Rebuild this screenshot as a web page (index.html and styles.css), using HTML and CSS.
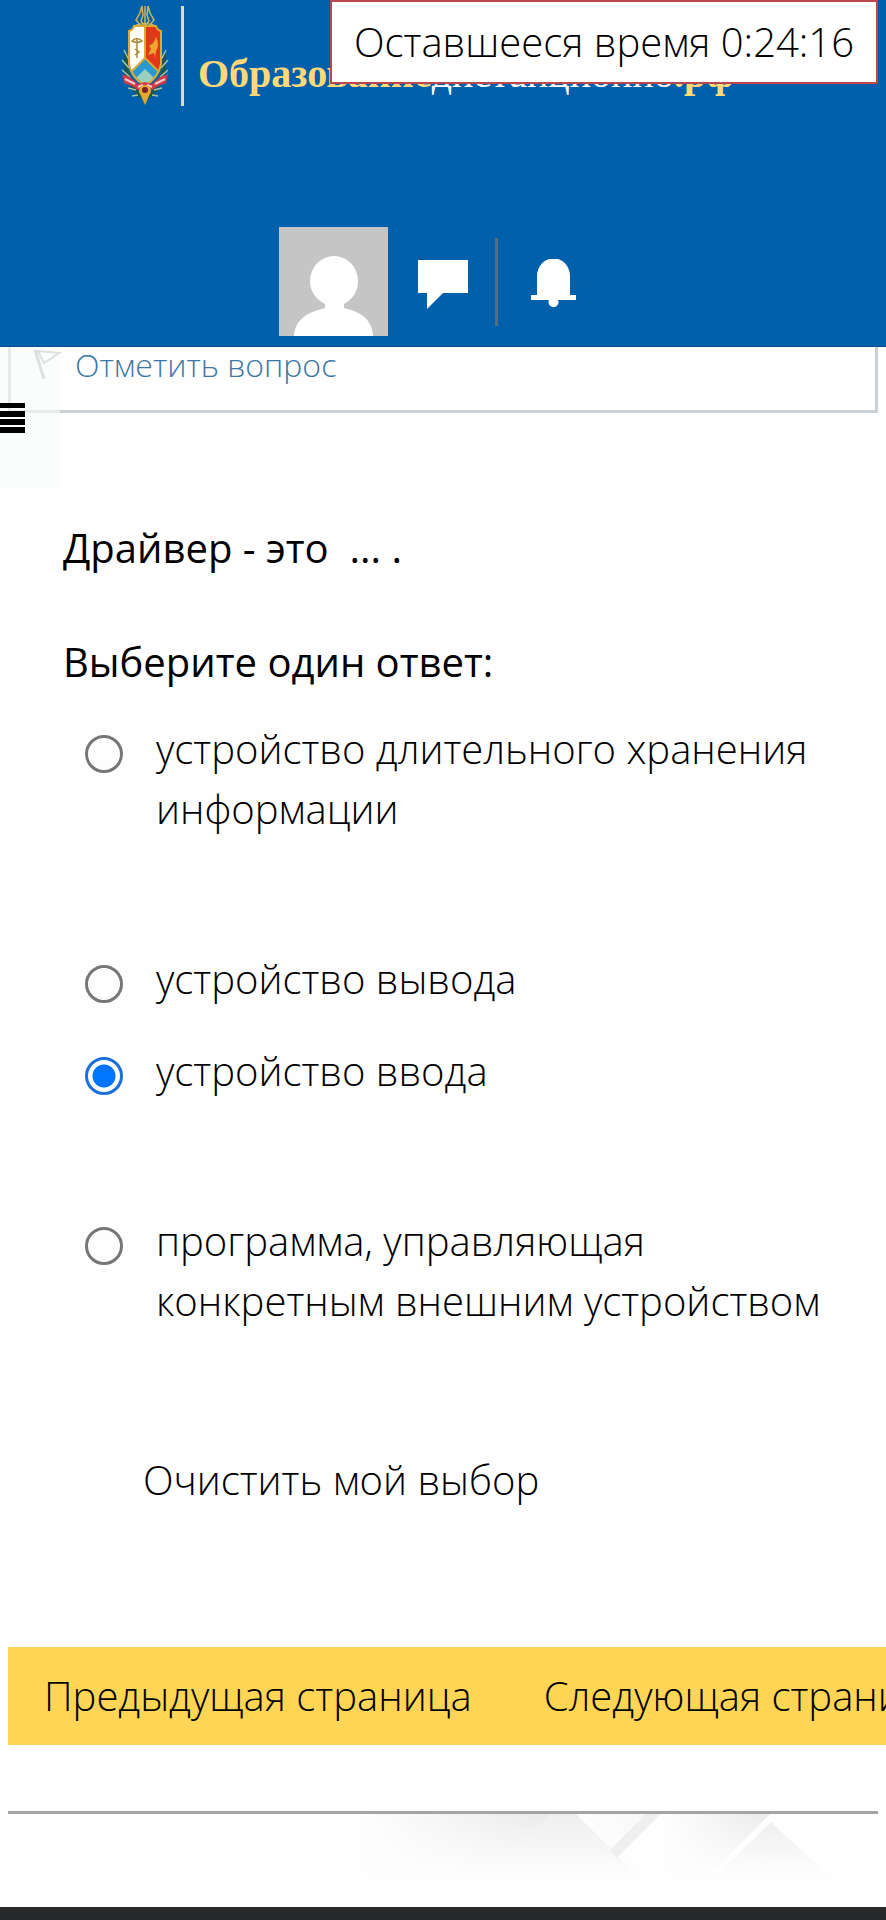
FILE: index.html
```
<!DOCTYPE html>
<html lang="ru">
<head>
    <meta charset="UTF-8">
    <meta name="viewport" content="width=device-width, initial-scale=1.0">
    <title>Тест</title>
    <link rel="stylesheet" href="styles.css">
</head>
<body>
    <header class="header">
        <a class="logo" href="#">
            <svg class="crest" viewBox="0 0 48 102" aria-hidden="true">
                <!-- crown -->
                <path d="M24 22V2M20 22l-5-6 4-7 2-7 1 9-2 6 4 5M28 22l5-6-4-7-2-7-1 9 2 6-4 5M13 22q11-5 22 0" fill="none" stroke="#c9b75f" stroke-width="1.5"/>
                <!-- laurel -->
                <path d="M5 50q-2 30 17 44M43 50q2 30-17 44" fill="none" stroke="#1e5647" stroke-width="4"/>
                <path d="M3 46l5 10M1 56l7 8M1 66l8 7M7 84l8 2M11 92l6-1M45 46l-5 10M47 56l-7 8M47 66l-8 7M41 84l-8 2M37 92l-6-1" stroke="#a3c4a5" stroke-width="1.5"/>
                <path d="M24 22h11q1 4 5 5v33q-2 11-16 18z" fill="#e3371b"/>
                <path d="M24 22H13q-1 4-5 5v33q2 11 16 18z" fill="#fff"/>
                <path d="M24 55L10 68q4 8 14 14 10-6 14-14z" fill="#2a98d0"/>
                <path d="M24 65l-9 9 9 8 9-8z" fill="#9acfc0"/>
                <path d="M13 22q-1 4-5 5v33q2 13 16 22 14-9 16-22V27q-4-1-5-5zM24 22v32L10 68M24 54l14 14" fill="none" stroke="#d9ab35" stroke-width="2"/>
                <path d="M11 37q5-5 10 0-5 3-10 0zM16 34v20M14 45l4 3-4 3" fill="none" stroke="#a88a3d" stroke-width="1.5"/>
                <path d="M35 33q-3 9-7 8l2 4-3 6 6-2 1 5 1-7q4-6 0-14z" fill="#f0a52c"/>
                <!-- ribbon and eye -->
                <path d="M1 70l8 3 8 7 7-2 7 2 8-7 8-3-2 9-8 3-6 4-7-2-7 2-6-4-8-3z" fill="#cf3b4b"/>
                <path d="M4 75l10 5M44 75l-10 5M17 83l5-2M31 83l-5-2" stroke="#f3c9c9" stroke-width="2"/>
                <circle cx="24" cy="87" r="6" fill="#e5a92f"/>
                <circle cx="24" cy="86" r="3" fill="#7b2030"/>
                <path d="M24 101l-4-9h8z" fill="#d9ab35"/>
            </svg>
            <span class="logo-text">Образование<span class="white">дистанционно</span>.рф</span>
        </a>
        <div class="user-menu">
            <a class="avatar" href="#" aria-label="Профиль">
                <svg viewBox="0 0 109 109">
                    <rect width="109" height="109" fill="#c5c5c5"/>
                    <path d="M15 109q1-18 21-25l10-3v-4q-15-8-15-23a24 25 0 0 1 48 0q0 15-14 23v4l10 3q18 7 19 25z" fill="#fff"/>
                </svg>
            </a>
            <button class="icon-btn messages" aria-label="Сообщения">
                <svg width="50" height="50" viewBox="0 0 50 50"><path d="M0 0h50v33H25L9 49V33H0z" fill="#fff"/></svg>
            </button>
            <button class="icon-btn bell" aria-label="Уведомления">
                <svg width="45" height="51" viewBox="0 0 45 51"><path d="M6 36V17a16 17 0 0 1 33 0v19h6v5H27a5 5 0 1 1-9 0H0v-5z" fill="#fff"/></svg>
            </button>
        </div>
    </header>

    <div class="timer">Оставшееся время 0:24:16</div>

    <main>
        <div class="info">
            <a class="flag" href="#">
                <svg width="28" height="32" viewBox="0 0 28 32" fill="none" stroke="#b4b7b7" aria-hidden="true">
                    <path d="M2 1l9 29" stroke-width="3"/>
                    <path d="M5 2l21 2-15 10z" stroke-width="2"/>
                </svg>
                Отметить вопрос
            </a>
            <button class="drawer" aria-label="Меню">
                <svg width="25" height="30" viewBox="0 0 25 30"><path d="M0 0h25v5H0zM0 8h25v6H0zM0 16h25v6H0zM0 24h25v6H0z"/></svg>
            </button>
        </div>

        <form class="question">
            <p class="qtext">Драйвер - это&nbsp; ... .</p>
            <fieldset>
                <legend>Выберите один ответ:</legend>
                <div class="answer spaced">
                    <input type="radio" name="answer" id="answer0">
                    <label for="answer0">устройство длительного хранения информации</label>
                </div>
                <div class="answer">
                    <input type="radio" name="answer" id="answer1">
                    <label for="answer1">устройство вывода</label>
                </div>
                <div class="answer spaced">
                    <input type="radio" name="answer" id="answer2" checked>
                    <label for="answer2">устройство ввода</label>
                </div>
                <div class="answer">
                    <input type="radio" name="answer" id="answer3">
                    <label for="answer3">программа, управляющая конкретным внешним устройством</label>
                </div>
            </fieldset>
            <a class="clear" href="#">Очистить мой выбор</a>
        </form>

        <div class="nav">
            <button>Предыдущая страница</button>
            <button>Следующая страница</button>
        </div>
        <hr>
    </main>

    <div class="pattern">
        <svg viewBox="0 0 886 93" aria-hidden="true">
            <defs>
                <linearGradient id="side">
                    <stop offset="0" stop-color="#000" stop-opacity="0"/>
                    <stop offset="1" stop-color="#000" stop-opacity="0.08"/>
                </linearGradient>
                <linearGradient id="down" x2="0" y2="1">
                    <stop offset="0" stop-color="#000" stop-opacity="0.06"/>
                    <stop offset="1" stop-color="#000" stop-opacity="0"/>
                </linearGradient>
                <linearGradient id="fade" x2="0" y2="1">
                    <stop offset="0" stop-color="#fefefe" stop-opacity="0"/>
                    <stop offset="0.7" stop-color="#fefefe"/>
                </linearGradient>
            </defs>
            <path d="M360 0h190l-66 66H360z" fill="url(#side)"/>
            <path d="M664 0h106l-66 66h-40z" fill="url(#side)"/>
            <path d="M576 0h84l-46 46z" fill="url(#side)" opacity="0.4"/>
            <rect width="886" height="93" fill="url(#fade)"/>
            <path d="M550 0h26l66 66H484z" fill="url(#down)"/>
            <path d="M771 8l60 56H714z" fill="url(#down)"/>
            <path d="M646 0h15l-44 44-7-8z" fill="#efefef"/>
        </svg>
    </div>
    <footer></footer>
</body>
</html>
```
FILE: styles.css
```
* {
    box-sizing: border-box;
}

body {
    margin: 0;
    min-height: 100vh;
    display: flex;
    flex-direction: column;
    position: relative;
    overflow-x: hidden;
    background-color: #fefefe;
    color: #000;
    font-family: "Open Sans", sans-serif;
    font-size: 40px;
    font-weight: 300;
    line-height: 60px;
}

a {
    color: inherit;
    text-decoration: none;
}

button {
    padding: 0;
    border: none;
    background: none;
    font: inherit;
    color: inherit;
    cursor: pointer;
}

svg {
    display: block;
}

/* Header */
.header {
    background-color: #0060ac;
    padding: 4px 8px 10px;
    border-bottom: 1px solid #0a4f8c;
}

.logo {
    display: flex;
    width: 644px;
    margin: 0 auto;
}

.crest {
    flex: none;
    width: 48px;
    height: 102px;
}

.logo-text {
    height: 100px;
    margin: 2px 0 0 12px;
    padding: 42px 0 0 14px;
    border-left: 3px solid #dde3a5;
    color: #ffd978;
    font-family: "Liberation Serif", serif;
    font-weight: bold;
    font-size: 40px;
    line-height: 52px;
}

.white {
    color: #fff;
    font-weight: normal;
}

.user-menu {
    display: flex;
    justify-content: center;
    align-items: center;
    margin-top: 121px;
}

.avatar {
    width: 109px;
    height: 109px;
}

.icon-btn {
    height: 88px;
    padding-top: 6px;
}

.messages {
    padding-left: 30px;
    padding-right: 27px;
    border-right: 3px solid #5a6b80;
}

.bell {
    padding-left: 33px;
    padding-right: 31px;
}

/* Quiz timer lies over the page */
.timer {
    position: absolute;
    top: 0;
    right: 8px;
    padding: 10px 22px;
    background-color: #fff;
    border: 2px solid #b9474d;
}

/* Question info */
main {
    padding-left: 8px;
}

.info {
    position: relative;
    height: 66px;
    margin-right: 8px;
    padding-left: 22px;
    border: solid #cad0d3;
    border-width: 0 3px 3px;
}

.flag {
    display: flex;
    align-items: center;
    gap: 14px;
    color: #3a78a6;
    font-size: 32px;
    line-height: 36px;
}

.drawer {
    position: absolute;
    left: -11px;
    top: 0;
    width: 60px;
    height: 140px;
    padding: 56px 0 54px;
    background-color: rgba(249, 251, 251, 0.6);
}

/* Question */
.question {
    padding: 105px 30px 137px 55px;
}

.qtext {
    margin: 0 0 54px;
    font-weight: 400;
}

fieldset {
    margin: 0;
    padding: 0;
    border: none;
}

legend {
    padding: 0;
    margin-bottom: 27px;
    font-weight: 400;
}

.answer {
    display: flex;
    align-items: flex-start;
    gap: 33px;
    padding-left: 22px;
    margin-bottom: 32px;
}

.spaced {
    margin-bottom: 110px;
}

input[type="radio"] {
    appearance: none;
    flex: none;
    width: 38px;
    height: 38px;
    margin: 16px 0 0;
    border: 3px solid #767676;
    border-radius: 50%;
}

input[type="radio"]:checked {
    border-color: #1a6fd8;
    background: radial-gradient(circle, #0075ff 11px, transparent 12px);
}

.clear {
    display: block;
    margin: 87px 0 0 80px;
}

/* Page navigation */
.nav {
    display: flex;
    background-color: #ffd555;
    overflow: hidden;
}

.nav button {
    flex: none;
    padding: 19px 36px;
    background-color: #ffd555;
    white-space: nowrap;
}

hr {
    height: 3px;
    margin: 66px 8px 0 0;
    border: none;
    background-color: #a3a4a5;
}

/* Bottom of the page */
.pattern svg {
    width: 100%;
}

footer {
    flex: 1;
    min-height: 14px;
    background-color: #28292b;
}
```
